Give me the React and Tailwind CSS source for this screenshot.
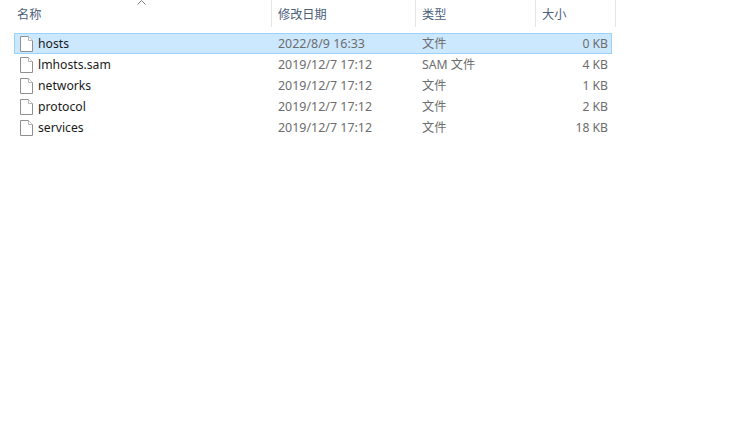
const files = [
  { name: 'hosts', date: '2022/8/9 16:33', type: '文件', size: '0 KB', selected: true },
  { name: 'lmhosts.sam', date: '2019/12/7 17:12', type: 'SAM 文件', size: '4 KB' },
  { name: 'networks', date: '2019/12/7 17:12', type: '文件', size: '1 KB' },
  { name: 'protocol', date: '2019/12/7 17:12', type: '文件', size: '2 KB' },
  { name: 'services', date: '2019/12/7 17:12', type: '文件', size: '18 KB' },
];

function FileIcon() {
  return (
    <svg width="13" height="16" viewBox="0 0 13 16" fill="none" className="shrink-0">
      <path d="M0.5 0.5H8.5L12.5 4.5V15.5H0.5Z" fill="#ffffff" stroke="#8f8f8f" />
      <path d="M8.5 0.5V4.5H12.5" fill="#ffffff" stroke="#b5b5b5" />
    </svg>
  );
}

export default function App() {
  return (
    <div className="relative h-[448px] w-[738px] overflow-hidden bg-white text-[12.2px] font-['Noto_Sans','Noto_Sans_CJK_SC',sans-serif]">
      <svg width="9" height="5" viewBox="0 0 9 5" fill="none" className="absolute left-[137px] top-0">
        <path d="M0.5 4.5L4.5 0.5L8.5 4.5" stroke="#808080" />
      </svg>

      {/* Header */}
      <div className="flex h-[27px] text-[#4c607a]">
        <div className="flex w-[272px] items-center border-r border-[#e5e5e5] pl-[17px] pt-[3px]">名称</div>
        <div className="flex w-[144px] items-center border-r border-[#e5e5e5] pl-[6px] pt-[3px]">修改日期</div>
        <div className="flex w-[120px] items-center border-r border-[#e5e5e5] pl-[6px] pt-[3px]">类型</div>
        <div className="flex w-[80px] items-center border-r border-[#e5e5e5] pl-[6px] pt-[3px]">大小</div>
      </div>

      {/* Rows */}
      <div className="mt-[6px] ml-[14px] flex w-[598px] flex-col">
        {files.map((f) => (
          <div
            key={f.name}
            className={`flex h-[21px] items-center border ${
              f.selected ? 'border-[#99d1ff] bg-[#cce8ff]' : 'border-transparent'
            }`}
          >
            <div className="flex w-[257px] items-center gap-[5px] pl-[5px] text-[#1a1a1a]">
              <FileIcon />
              <span className="pt-[2px]">{f.name}</span>
            </div>
            <div className="w-[144px] pl-[6px] pt-[2px] text-[12.45px] text-[#6d6d6d]">{f.date}</div>
            <div className="w-[120px] pl-[6px] pt-[2px] text-[#6d6d6d]">{f.type}</div>
            <div className="w-[72px] pt-[2px] text-right text-[#6d6d6d]">{f.size}</div>
          </div>
        ))}
      </div>
    </div>
  );
}
